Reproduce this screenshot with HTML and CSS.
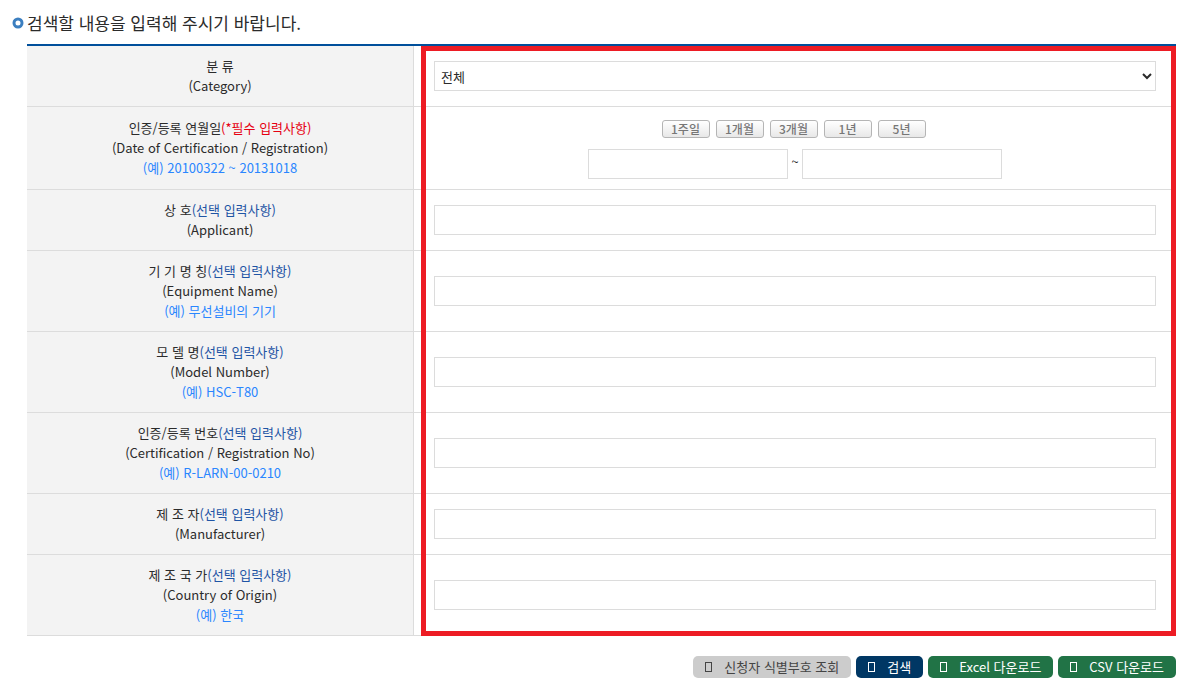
FILE: index.html
```html
<!DOCTYPE html>
<html lang="ko">
<head>
<meta charset="utf-8">
<title>인증 검색</title>
<link rel="stylesheet" href="styles.css">
</head>
<body>
<main class="page">
  <h1 class="title">
    <svg class="bullet" viewBox="0 0 12 12" aria-hidden="true"><circle cx="6" cy="6" r="4" fill="#fff" stroke="#3c7fc0" stroke-width="3"/></svg>
    검색할 내용을 입력해 주시기 바랍니다.
  </h1>
  <form class="search">
    <div class="frame">
      <table class="form-table">
        <tbody>
          <tr>
            <th scope="row"><label for="category">분 류<br>(Category)</label></th>
            <td><select id="category" class="field"><option>전체</option></select></td>
          </tr>
          <tr>
            <th scope="row"><label for="date-from">인증/등록 연월일<span class="required">(*필수 입력사항)</span><br>(Date of Certification / Registration)<br><span class="example">(예) 20100322 ~ 20131018</span></label></th>
            <td>
              <div class="periods">
                <button type="button" class="period">1주일</button>
                <button type="button" class="period">1개월</button>
                <button type="button" class="period">3개월</button>
                <button type="button" class="period">1년</button>
                <button type="button" class="period">5년</button>
              </div>
              <div class="dates">
                <input type="text" id="date-from" class="field date">
                <span class="tilde">~</span>
                <input type="text" id="date-to" class="field date" aria-label="종료일">
              </div>
            </td>
          </tr>
          <tr>
            <th scope="row"><label for="applicant">상 호<span class="optional">(선택 입력사항)</span><br>(Applicant)</label></th>
            <td><input type="text" id="applicant" class="field"></td>
          </tr>
          <tr>
            <th scope="row"><label for="equipment">기 기 명 칭<span class="optional">(선택 입력사항)</span><br>(Equipment Name)<br><span class="example">(예) 무선설비의 기기</span></label></th>
            <td><input type="text" id="equipment" class="field"></td>
          </tr>
          <tr>
            <th scope="row"><label for="model">모 델 명<span class="optional">(선택 입력사항)</span><br>(Model Number)<br><span class="example">(예) HSC-T80</span></label></th>
            <td><input type="text" id="model" class="field"></td>
          </tr>
          <tr>
            <th scope="row"><label for="cert">인증/등록 번호<span class="optional">(선택 입력사항)</span><br>(Certification / Registration No)<br><span class="example">(예) R-LARN-00-0210</span></label></th>
            <td><input type="text" id="cert" class="field"></td>
          </tr>
          <tr>
            <th scope="row"><label for="maker">제 조 자<span class="optional">(선택 입력사항)</span><br>(Manufacturer)</label></th>
            <td><input type="text" id="maker" class="field"></td>
          </tr>
          <tr>
            <th scope="row"><label for="country">제 조 국 가<span class="optional">(선택 입력사항)</span><br>(Country of Origin)<br><span class="example">(예) 한국</span></label></th>
            <td><input type="text" id="country" class="field"></td>
          </tr>
        </tbody>
      </table>
      <div class="highlight"></div>
    </div>
    <div class="actions">
      <button type="button" class="action gray"><span class="glyph"></span>신청자 식별부호 조회</button>
      <button type="submit" class="action navy"><span class="glyph"></span>검색</button>
      <button type="button" class="action green"><span class="glyph"></span>Excel 다운로드</button>
      <button type="button" class="action green"><span class="glyph"></span>CSV 다운로드</button>
    </div>
  </form>
</main>
</body>
</html>
```
FILE: styles.css
```css
* { box-sizing: border-box; }

body {
  margin: 0;
  background: #fff;
  color: #2b2b2b;
  font: 13px/20px "Noto Sans CJK KR", sans-serif;
}

button, input, select { font: inherit; color: inherit; }

.page { padding: 8px 23px 0 12px; }

.title {
  display: flex;
  align-items: center;
  gap: 3px;
  margin: 0;
  height: 30px;
  font-size: 17px;
  font-weight: 400;
}

.bullet { width: 12px; height: 12px; }

.search { margin: 6px 0 0 15px; }

.frame { position: relative; }

.form-table {
  width: 100%;
  border-top: 2px solid #004f9b;
  border-spacing: 0;
  table-layout: fixed;
}

.form-table th {
  width: 387px;
  padding: 10px 0;
  background: #f3f3f3;
  border-right: 1px solid #dcdcdc;
  border-bottom: 1px solid #dcdcdc;
  font-weight: 400;
  text-align: center;
}

.form-table td {
  padding: 10px 20px;
  border-bottom: 1px solid #dcdcdc;
}

.required { color: #e60012; }
.optional { color: #1f55a5; }
.example { color: #2a86ff; }

.field {
  display: block;
  width: 100%;
  height: 30px;
  padding: 0 2px;
  border: 1px solid #dcdcdc;
  border-radius: 0;
  background: #fff;
}

.periods {
  display: flex;
  justify-content: center;
  gap: 6px;
  padding: 3px 3px 11px 0;
}

.period {
  width: 48px;
  height: 18px;
  padding: 0;
  border: 1px solid #b5b5b5;
  border-radius: 3px;
  background: linear-gradient(#fff, #e8e8e8);
  color: #777;
  font-size: 12px;
  font-weight: 500;
  line-height: 16px;
}

.dates {
  display: flex;
  justify-content: center;
}

.date { width: 200px; }

.tilde {
  width: 14px;
  font-size: 13px;
  line-height: 26px;
  text-align: center;
}

.highlight {
  position: absolute;
  inset: 2px 0 0 394px;
  border: 5px solid #ed1c24;
  pointer-events: none;
}

.actions {
  display: flex;
  justify-content: flex-end;
  gap: 5px;
  padding-top: 20px;
}

.action {
  display: flex;
  align-items: center;
  gap: 12px;
  height: 22px;
  padding: 0 12px;
  border: 0;
  border-radius: 5px;
}

.glyph {
  width: 7px;
  height: 10px;
  border: 1px solid currentColor;
}

.gray { background: #ccc; color: #444; }
.navy { background: #003764; color: #fff; }
.green { background: #217346; color: #fff; }
```
